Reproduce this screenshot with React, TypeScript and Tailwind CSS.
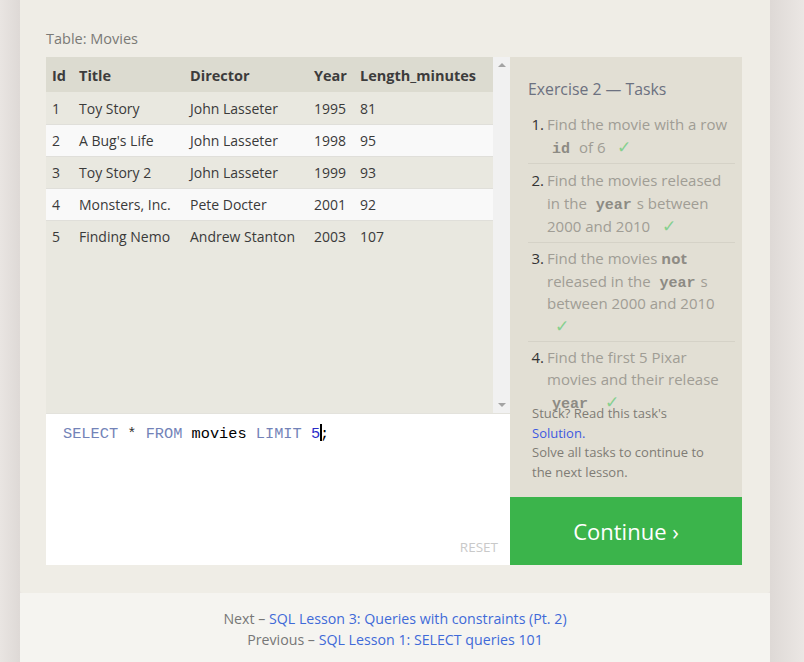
import React from "react";

const rows = [
  ["1", "Toy Story", "John Lasseter", "1995", "81"],
  ["2", "A Bug's Life", "John Lasseter", "1998", "95"],
  ["3", "Toy Story 2", "John Lasseter", "1999", "93"],
  ["4", "Monsters, Inc.", "Pete Docter", "2001", "92"],
  ["5", "Finding Nemo", "Andrew Stanton", "2003", "107"],
];

const Code = ({ children }: { children: React.ReactNode }) => (
  <code className="px-[5px] font-bold leading-none text-[#8d8b84] [font-family:'Liberation_Mono',monospace] text-[15px]">{children}</code>
);

const Check = () => <span className="ml-[8px] text-[17px] leading-none text-[#86d08f]">✓</span>;

export default function App() {
  const font = "[font-family:'Open_Sans','Noto_Sans',sans-serif]";
  return (
    <div className={`min-h-[662px] w-[804px] flex bg-[#e9e5e2] ${font}`}>
      <div className="w-[20px] bg-gradient-to-r from-[#e9e5e2] to-[#ded9d6]" />
      <div className="w-[750px] flex flex-col">
        <div className="bg-[#efede6] rounded-b-[3px] pl-[26px] pr-[28px] pt-[29px] pb-[28px]">
          <div className="text-[14.5px] text-[#7b7a76] leading-[20px] mb-[8px]">Table: Movies</div>
          <div className="flex">
            <div className="w-[464px] flex flex-col">
              <div className="h-[356px] flex bg-[#e9e8e0]">
                <div className="w-[447px] text-[14px] text-[#3a3a3a]">
                  <div className="flex h-[35px] pt-[2px] items-center bg-[#dcdbd0] font-bold text-[14.5px] text-[#3c3c3c]">
                    <div className="w-[27px] pl-[6px]">Id</div>
                    <div className="w-[111px] pl-[6px]">Title</div>
                    <div className="w-[124px] pl-[6px]">Director</div>
                    <div className="w-[46px] pl-[6px]">Year</div>
                    <div className="flex-1 pl-[6px]">Length_minutes</div>
                  </div>
                  {rows.map((r, i) => (
                    <div
                      key={i}
                      className={`flex h-[32px] items-center ${i > 0 ? "border-t border-[#e0dfda]" : ""} ${i % 2 === 1 ? "bg-[#f9f9f9]" : "bg-[#e9e8e0]"}`}
                    >
                      <div className="w-[27px] pl-[6px]">{r[0]}</div>
                      <div className="w-[111px] pl-[6px] whitespace-nowrap">{r[1]}</div>
                      <div className="w-[124px] pl-[6px] whitespace-nowrap">{r[2]}</div>
                      <div className="w-[46px] pl-[6px]">{r[3]}</div>
                      <div className="flex-1 pl-[6px]">{r[4]}</div>
                    </div>
                  ))}
                </div>
                <div className="w-[17px] bg-[#f1f1f1] flex flex-col justify-between items-center py-[6px]">
                  <div className="w-0 h-0 border-l-[4px] border-r-[4px] border-b-[4px] border-l-transparent border-r-transparent border-b-[#a3a3a3]" />
                  <div className="w-0 h-0 border-l-[4px] border-r-[4px] border-t-[4px] border-l-transparent border-r-transparent border-t-[#a3a3a3]" />
                </div>
              </div>
              <div className="h-[152px] bg-white border-t border-[#e3e2dc] flex flex-col justify-between pl-[17px] pr-[12px] pt-[10px] pb-[8px]">
                <div className="text-[15.3px] leading-[20px] [font-family:'Liberation_Mono','DejaVu_Sans_Mono',monospace] whitespace-pre">
                  <span className="text-[#7383b8]">SELECT</span>
                  <span className="text-[#333]"> * </span>
                  <span className="text-[#7383b8]">FROM</span>
                  <span className="text-black"> movies </span>
                  <span className="text-[#7383b8]">LIMIT</span>
                  <span> </span>
                  <span className="text-[#2b2bc8]">5</span>
                  <span className="inline-block w-[2px] h-[17px] bg-black align-[-3px] -mr-[2px]" />
                  <span className="text-black">;</span>
                </div>
                <div className="self-end text-[13.5px] text-[#c9c9c9]">RESET</div>
              </div>
            </div>
            <div className="w-[232px] flex flex-col">
              <div className="relative h-[440px] bg-[#e2dfd4] pl-[18px] pr-[7px] pt-[20px] overflow-hidden">
                <div className="text-[15.8px] text-[#6c7180] leading-[24px] mb-[12px]">Exercise 2 — Tasks</div>
                <ol className="text-[15px] leading-[23px] text-[#a09d95]">
                  <li className="flex pb-[4px] border-b border-[#d5d2c7]">
                    <span className="w-[19px] text-right pr-[3px] text-[#333]">1.</span>
                    <span className="flex-1">
                      Find the movie with a row <Code>id</Code> of 6 <Check />
                    </span>
                  </li>
                  <li className="flex pt-[5px] pb-[4px] border-b border-[#d5d2c7]">
                    <span className="w-[19px] text-right pr-[3px] text-[#333]">2.</span>
                    <span className="flex-1">
                      Find the movies released in the <Code>year</Code>s between 2000 and 2010 <Check />
                    </span>
                  </li>
                  <li className="flex pt-[4px] pb-[3px] border-b border-[#d5d2c7] leading-[22.7px]">
                    <span className="w-[19px] text-right pr-[3px] text-[#333]">3.</span>
                    <span className="flex-1">
                      Find the movies <b className="text-[#8f8c85]">not</b> released in the <Code>year</Code>s between 2000 and 2010 <Check />
                    </span>
                  </li>
                  <li className="flex pt-[4px] leading-[22.5px]">
                    <span className="w-[19px] text-right pr-[3px] text-[#333]">4.</span>
                    <span className="flex-1">
                      Find the first 5 Pixar movies and their release <Code>year</Code> <Check />
                    </span>
                  </li>
                </ol>
                <div className="absolute left-[22px] right-[16px] bottom-[15px] text-[13px] leading-[19.5px] text-[#7f7c75]">
                  <div>Stuck? Read this task's</div>
                  <div className="text-[#3d5ae0]">Solution.</div>
                  <div>Solve all tasks to continue to the next lesson.</div>
                </div>
              </div>
              <div className="h-[68px] bg-[#3bb44b] flex items-center justify-center text-white text-[22px]">
                Continue ›
              </div>
            </div>
          </div>
        </div>
        <div className="flex-1 bg-[#f5f4f0] pt-[15px] text-center text-[14.2px] leading-[21px] text-[#777]">
          <div>
            Next – <span className="text-[#3f6ad8]">SQL Lesson 3: Queries with constraints (Pt. 2)</span>
          </div>
          <div>
            Previous – <span className="text-[#3f6ad8]">SQL Lesson 1: SELECT queries 101</span>
          </div>
        </div>
      </div>
      <div className="w-[34px] bg-gradient-to-r from-[#ded9d6] to-[#ebe7e4]" />
    </div>
  );
}
